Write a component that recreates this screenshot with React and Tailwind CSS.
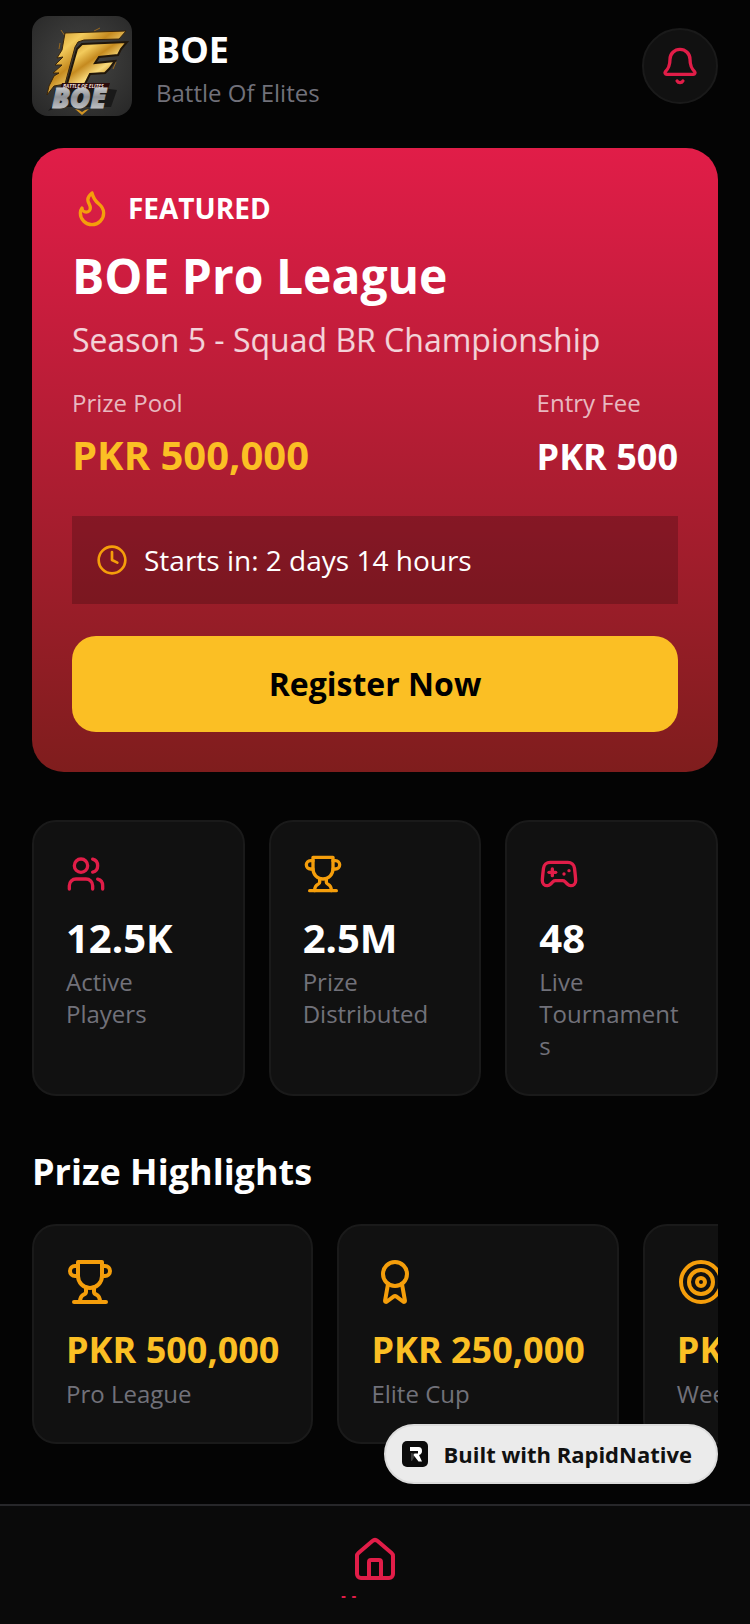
import { Award, Bell, Clock, Flame, Gamepad2, House, Target, Users } from "lucide-react";

const stats = [
  { icon: Users, color: "text-[#e11d48]", value: "12.5K", label: "Active Players" },
  { icon: TrophyIcon, color: "text-[#f59e0b]", value: "2.5M", label: "Prize Distributed" },
  { icon: Gamepad2, color: "text-[#e11d48]", value: "48", label: "Live Tournaments" },
];

const prizes = [
  { icon: TrophyIcon, amount: "PKR 500,000", name: "Pro League" },
  { icon: Award, amount: "PKR 250,000", name: "Elite Cup" },
  { icon: Target, amount: "PKR 100,000", name: "Weekly Cup" },
];

function TrophyIcon({ className }) {
  return (
    <svg
      viewBox="0 0 24 24"
      className={className}
      fill="none"
      stroke="currentColor"
      strokeWidth="2"
      strokeLinecap="round"
      strokeLinejoin="round"
      aria-hidden="true"
    >
      <path d="M6 9H4.5a2.5 2.5 0 0 1 0-5H6" />
      <path d="M18 9h1.5a2.5 2.5 0 0 0 0-5H18" />
      <path d="M4 22h16" />
      <path d="M10 14.66V17c0 .55-.47.98-.97 1.21C7.85 18.75 7 20.24 7 22" />
      <path d="M14 14.66V17c0 .55.47.98.97 1.21C16.15 18.75 17 20.24 17 22" />
      <path d="M18 2H6v7a6 6 0 0 0 12 0V2Z" />
    </svg>
  );
}

function BoeLogo() {
  return (
    <svg
      viewBox="0 0 100 100"
      className="size-[100px] shrink-0 rounded-2xl"
      role="img"
      aria-label="BOE logo"
    >
      <defs>
        <radialGradient id="logoBg" cx="50%" cy="45%" r="70%">
          <stop offset="0" stopColor="#464644" />
          <stop offset="1" stopColor="#282828" />
        </radialGradient>
        <linearGradient id="gold" x1="0" y1="0" x2="1" y2="1">
          <stop offset="0" stopColor="#c48a22" />
          <stop offset="0.25" stopColor="#f3cb5c" />
          <stop offset="0.42" stopColor="#c58a1f" />
          <stop offset="0.6" stopColor="#f8da7c" />
          <stop offset="0.75" stopColor="#c98f25" />
          <stop offset="1" stopColor="#8f590f" />
        </linearGradient>
        <linearGradient id="silver" x1="0" y1="0" x2="0" y2="1">
          <stop offset="0" stopColor="#ffffff" />
          <stop offset="0.5" stopColor="#8f9196" />
          <stop offset="1" stopColor="#dcdde0" />
        </linearGradient>
      </defs>
      <rect width="100" height="100" fill="url(#logoBg)" />
      <path
        d="M33 20l-4-6M62 15l6-3M27 33l1-6M84 46l-3 7"
        stroke="#9a6a20"
        strokeWidth="1"
        fill="none"
      />
      <path
        d="M33 17L94 15 87 23 52 24 46 26 43 31 33 68 22 70 15 79 17 70 22 60 27 57 21 57 30 49 23 49 31 41 25 42 30 34z"
        fill="url(#gold)"
        stroke="#3a2509"
        strokeWidth="1"
      />
      <path
        d="M50 28L95 26 89 33 86 39 67 41 63 47 83 45 77 53 73 57 58 58 53 68 35 68 45 33z"
        fill="url(#gold)"
        stroke="#20160a"
        strokeWidth="2"
      />
      <path d="M30 67h48l-2 6H28z" fill="#2b0b0b" />
      <path d="M23 73h54l8 1-6 17H33l-9 1-8 3 5-6z" fill="#191919" />
      <text
        x="31"
        y="72"
        fill="#e9dcd7"
        fontFamily="Open Sans, sans-serif"
        fontSize="5"
        fontWeight="700"
        fontStyle="italic"
      >
        BATTLE OF ELITES
      </text>
      <text
        x="20"
        y="92"
        fill="url(#silver)"
        stroke="url(#silver)"
        strokeWidth="1"
        fontFamily="Open Sans, sans-serif"
        fontSize="28"
        fontWeight="800"
        fontStyle="italic"
      >
        BOE
      </text>
      <path d="M43 93l4 1 3 2 3-2 4-1-7 6z" fill="#cf9324" />
    </svg>
  );
}

function Header() {
  return (
    <header className="flex items-center justify-between px-8 py-4">
      <div className="flex items-center gap-6">
        <BoeLogo />
        <div>
          <h1 className="text-4xl leading-[54px] font-bold text-white">BOE</h1>
          <p className="text-2xl leading-8 text-[#71717a]">Battle Of Elites</p>
        </div>
      </div>
      <button
        type="button"
        aria-label="Notifications"
        className="flex size-[76px] items-center justify-center rounded-full border-2 border-[#1a1a1a] bg-[#111111]"
      >
        <Bell className="size-10 text-[#e11d48]" />
      </button>
    </header>
  );
}

function FeaturedCard() {
  return (
    <section className="mx-8 mt-4 rounded-4xl bg-linear-to-b/srgb from-[#e11d48] to-[#7f1d1d] p-10">
      <div className="flex items-center gap-4">
        <Flame className="size-10 text-[#f59e0b]" />
        <span className="text-[28px] leading-10 font-bold text-white">FEATURED</span>
      </div>
      <h2 className="mt-4 text-5xl leading-[64px] font-bold text-white">BOE Pro League</h2>
      <p className="mt-2 text-[32px] leading-[48px] text-white/80">
        Season 5 - Squad BR Championship
      </p>
      <div className="mt-6 flex items-start justify-between">
        <div>
          <p className="text-2xl leading-[30px] text-white/70">Prize Pool</p>
          <p className="text-[40px] leading-[74px] font-bold text-[#fbbf24]">PKR 500,000</p>
        </div>
        <div>
          <p className="text-2xl leading-[30px] text-white/70">Entry Fee</p>
          <p className="text-4xl leading-[78px] font-bold text-white">PKR 500</p>
        </div>
      </div>
      <div className="mt-5 flex items-center gap-4 bg-black/20 p-6">
        <Clock className="size-8 text-[#f59e0b]" />
        <span className="text-[28px] leading-10 text-white">Starts in: 2 days 14 hours</span>
      </div>
      <button
        type="button"
        className="mt-8 w-full rounded-3xl bg-[#fbbf24] py-6 text-[32px] leading-[48px] font-bold text-black"
      >
        Register Now
      </button>
    </section>
  );
}

function StatCard({ icon: Icon, color, value, label }) {
  return (
    <div className="rounded-3xl border-2 border-[#1a1a1a] bg-[#111111] p-8">
      <Icon className={`size-10 ${color}`} />
      <p className="mt-4 text-[40px] leading-[56px] font-bold text-white">{value}</p>
      <p className="text-2xl leading-8 wrap-anywhere text-[#71717a]">{label}</p>
    </div>
  );
}

function PrizeCard({ icon: Icon, amount, name }) {
  return (
    <div className="shrink-0 rounded-3xl border-2 border-[#1a1a1a] bg-[#111111] p-8">
      <Icon className="size-12 text-[#f59e0b]" />
      <p className="mt-4 text-4xl leading-[56px] font-bold text-[#fbbf24]">{amount}</p>
      <p className="text-2xl leading-8 text-[#71717a]">{name}</p>
    </div>
  );
}

function RapidNativeBadge() {
  return (
    <a
      href="#rapidnative"
      className="absolute right-8 bottom-full mb-[22px] flex items-center gap-[15px] rounded-full border-2 border-[#dcdcdc] bg-[#ebebeb] py-3 pr-6 pl-4 text-[22px] leading-8 font-bold text-[#111111]"
    >
      <svg viewBox="0 0 26 26" className="size-[26px]" aria-hidden="true">
        <rect width="26" height="26" rx="5" fill="#0b0b0b" />
        <path d="M9 12l5 1-4 7H9z" fill="#3d3d3d" />
        <path d="M8 6h8.500q3.500 0 3.500 4 0 3-3 4l3 6.500h-3.500L11.500 14l1-1.500H16V10H8z" fill="#ffffff" />
      </svg>
      Built with RapidNative
    </a>
  );
}

function TabBar() {
  return (
    <nav className="relative h-[120px] border-t-2 border-[#27272a] bg-[#0a0a0a]">
      <RapidNativeBadge />
      <a href="#home" className="flex flex-col items-center pt-[30px] text-[#e11d48]">
        <House className="size-12" />
        <span className="h-3.5 overflow-hidden text-2xl leading-10 font-bold">Home</span>
      </a>
    </nav>
  );
}

function App() {
  return (
    <div className="flex min-h-screen flex-col bg-[#040404] font-['Open_Sans',sans-serif]">
      <Header />
      <main className="flex-1">
        <FeaturedCard />
        <section className="mx-8 mt-12 grid grid-cols-3 gap-6">
          {stats.map((stat) => (
            <StatCard key={stat.label} {...stat} />
          ))}
        </section>
        <section className="mx-8 mt-12">
          <h2 className="text-4xl leading-[56px] font-bold text-white">Prize Highlights</h2>
          <div className="mt-6 flex gap-6 overflow-hidden">
            {prizes.map((prize) => (
              <PrizeCard key={prize.name} {...prize} />
            ))}
          </div>
        </section>
      </main>
      <TabBar />
    </div>
  );
}

export default App;
